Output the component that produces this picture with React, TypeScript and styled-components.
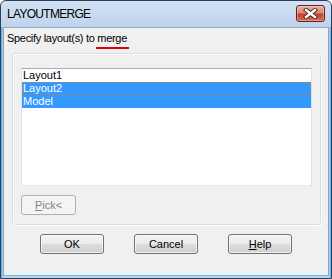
import React from 'react';
import styled, { createGlobalStyle, css } from 'styled-components';

const Global = createGlobalStyle`
  html, body { margin: 0; padding: 0; background: #ffffff; }
  body { font-family: "Liberation Sans", Arial, sans-serif; font-size: 11px; color: #000; }
  * { box-sizing: border-box; }
`;

const Window = styled.div`
  width: 332px;
  height: 279px;
  border: 1px solid #2a3f5a;
  border-radius: 6px 6px 0 0;
  background: linear-gradient(#d3e2f3, #bed3eb 26px);
  display: flex;
  flex-direction: column;
  overflow: hidden;
`;

const TitleBar = styled.div`
  height: 26px;
  flex: none;
  display: flex;
  align-items: center;
  justify-content: space-between;
  padding: 0 6px 0 6px;
`;

const Title = styled.div`
  font-family: "Liberation Sans", Arial, sans-serif;
  font-size: 12px;
  letter-spacing: -0.7px;
  color: #000;
  padding-bottom: 1px;
`;

const CloseButton = styled.div`
  width: 29px;
  height: 17px;
  margin-top: -2px;
  border: 1px solid #5e2424;
  border-radius: 3px;
  background: linear-gradient(#eab0a2, #d98773 45%, #c4432c 55%, #d4705a);
  box-shadow: inset 0 0 0 1px rgba(255, 255, 255, 0.3);
  display: flex;
  align-items: center;
  justify-content: center;
`;

const Frame = styled.div`
  flex: 1;
  display: flex;
  flex-direction: column;
  padding: 0 2px 2px 2px;
  background: linear-gradient(90deg, #4aa6de, #bed3eb 2px, #bed3eb calc(100% - 2px), #4ab6e6);
`;

const Client = styled.div`
  flex: 1;
  border: 1px solid #8ea6c2;
  border-bottom-color: #5fc0ea;
  background: #f0f0f0;
  display: flex;
  flex-direction: column;
  padding: 4px 7px 0 3px;
`;

const Prompt = styled.div`
  line-height: 13px;
  height: 13px;
  letter-spacing: -0.3px;
  white-space: nowrap;
`;

const Marked = styled.span`
  position: relative;
  &::after {
    content: '';
    position: absolute;
    left: -1px;
    right: -2px;
    top: 15px;
    height: 2px;
    background: #e00000;
  }
`;

const GroupBox = styled.div`
  margin: 8px 0 0 5px;
  height: 172px;
  border: 1px solid #d5dfe5;
  border-radius: 3px;
  box-shadow: inset 1px 1px 0 #ffffff, 1px 1px 0 #ffffff;
  padding: 14px 8px 0 8px;
  display: flex;
  flex-direction: column;
`;

const ListBox = styled.div`
  height: 118px;
  background: #ffffff;
  border: 1px solid #e2e3ea;
  border-top-color: #abadb3;
  border-right-color: #dbdfe6;
  border-bottom-color: #e3e9ef;
  display: flex;
  flex-direction: column;
`;

const dots = '#c9803f';

const focusRing = css`
  &::after {
    content: '';
    position: absolute;
    inset: 0;
    pointer-events: none;
    background:
      repeating-linear-gradient(90deg, ${dots} 0 1px, transparent 1px 2px) top left / 100% 1px no-repeat,
      repeating-linear-gradient(90deg, ${dots} 0 1px, transparent 1px 2px) bottom left / 100% 1px no-repeat,
      repeating-linear-gradient(180deg, ${dots} 0 1px, transparent 1px 2px) top left / 1px 100% no-repeat,
      repeating-linear-gradient(180deg, ${dots} 0 1px, transparent 1px 2px) top right / 1px 100% no-repeat;
  }
`;

const Row = styled.div<{ $selected?: boolean; $focus?: boolean }>`
  position: relative;
  height: 13px;
  line-height: 13px;
  padding-left: 1px;
  background: ${(p) => (p.$selected ? '#3399ff' : 'transparent')};
  color: ${(p) => (p.$selected ? '#ffffff' : '#000000')};
  white-space: nowrap;
  ${(p) => p.$focus && focusRing}
`;

const Button = styled.div<{ $disabled?: boolean }>`
  width: ${(p) => (p.$disabled ? '55px' : '64px')};
  height: 20px;
  border: 1px solid ${(p) => (p.$disabled ? '#adb2b5' : '#707070')};
  border-radius: 3px;
  background: ${(p) =>
    p.$disabled
      ? '#f4f4f4'
      : 'linear-gradient(#f2f2f2, #ebebeb 50%, #dddddd 50%, #cfcfcf)'};
  box-shadow: ${(p) => (p.$disabled ? 'none' : 'inset 0 0 0 1px rgba(255,255,255,0.7)')};
  color: ${(p) => (p.$disabled ? '#838383' : '#000000')};
  display: flex;
  align-items: center;
  justify-content: center;
  line-height: 13px;
`;

const PickWrap = styled.div`
  margin-top: 9px;
  display: flex;
`;

const Key = styled.span`
  text-decoration: underline;
`;

const ButtonRow = styled.div`
  margin-top: 9px;
  display: flex;
  justify-content: center;
  gap: 30px;
  padding-left: 4px;
`;

const CloseIcon = () => (
  <svg width="15" height="11" viewBox="0 0 15 11">
    <path d="M3 2 L12 9 M12 2 L3 9" stroke="#4a1a1a" strokeWidth="4.2" strokeLinecap="square" />
    <path d="M3 2 L12 9 M12 2 L3 9" stroke="#ffffff" strokeWidth="2.4" strokeLinecap="square" />
  </svg>
);

export default function App() {
  return (
    <>
      <Global />
      <Window>
        <TitleBar>
          <Title>LAYOUTMERGE</Title>
          <CloseButton>
            <CloseIcon />
          </CloseButton>
        </TitleBar>
        <Frame>
          <Client>
            <Prompt>
              Specify layout(s) to <Marked>merge</Marked>
            </Prompt>
            <GroupBox>
              <ListBox>
                <Row>Layout1</Row>
                <Row $selected $focus>Layout2</Row>
                <Row $selected>Model</Row>
              </ListBox>
              <PickWrap>
                <Button $disabled>
                  <span>
                    <Key>P</Key>ick&lt;
                  </span>
                </Button>
              </PickWrap>
            </GroupBox>
            <ButtonRow>
              <Button>OK</Button>
              <Button>Cancel</Button>
              <Button>
                <span>
                  <Key>H</Key>elp
                </span>
              </Button>
            </ButtonRow>
          </Client>
        </Frame>
      </Window>
    </>
  );
}
